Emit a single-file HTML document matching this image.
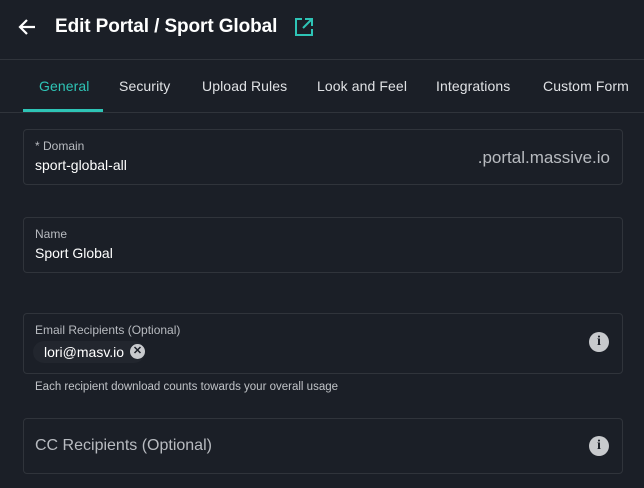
<!DOCTYPE html>
<html><head><style>
*{box-sizing:border-box;margin:0;padding:0}
body{width:644px;height:488px;overflow:hidden;background:#1b1f27;font-family:"Liberation Sans",sans-serif;color:#fff;position:relative}
.a{position:absolute}
.box{position:absolute;left:23px;width:600px;border:1px solid #30343b;border-radius:4px}
.lbl{position:absolute;left:11px;font-size:12px;color:#b8bbc0}
.val{position:absolute;left:11px;font-size:14px;color:#fff}
.tab{position:absolute;top:78px;font-size:14px;color:#e0e2e5;letter-spacing:0.1px}
.info{position:absolute;right:13px;width:20px;height:20px;border-radius:50%;background:#c8cacd;color:#1b1f27;font-weight:bold;font-size:14px;text-align:center;line-height:20px;font-family:"Liberation Serif",serif}
</style></head><body>
<svg class="a" style="left:17px;top:17px" width="20" height="20" viewBox="0 0 20 20"><path d="M18 10H3M10 3L3 10L10 17" stroke="#fff" stroke-width="2.2" fill="none"/></svg>
<div class="a" style="left:55px;top:16px;font-size:19px;font-weight:bold;letter-spacing:-0.1px">Edit Portal / Sport Global</div>
<svg class="a" style="left:294px;top:17px" width="20" height="20" viewBox="0 0 20 20"><path d="M8 2H2V18H18V12M11 2H18V9M18 2L9 11" stroke="#2ec4b6" stroke-width="2" fill="none"/></svg>
<div class="a" style="left:0;top:59px;width:644px;height:1px;background:#30343b"></div>
<div class="tab" style="left:39px;color:#2ec4b6">General</div>
<div class="tab" style="left:119px">Security</div>
<div class="tab" style="left:202px">Upload Rules</div>
<div class="tab" style="left:317px">Look and Feel</div>
<div class="tab" style="left:436px">Integrations</div>
<div class="tab" style="left:543px">Custom Form</div>
<div class="a" style="left:0;top:112px;width:644px;height:1px;background:#30343b"></div>
<div class="a" style="left:23px;top:109px;width:80px;height:3px;background:#2ec4b6"></div>
<div class="box" style="top:129px;height:56px"><div class="lbl" style="top:9px">* Domain</div><div class="val" style="top:27px">sport-global-all</div><div class="a" style="right:12px;top:18px;font-size:17px;color:#b8bbc0">.portal.massive.io</div></div>
<div class="box" style="top:217px;height:56px"><div class="lbl" style="top:9px">Name</div><div class="val" style="top:27px">Sport Global</div></div>
<div class="box" style="top:313px;height:61px"><div class="lbl" style="top:9px">Email Recipients (Optional)</div>
<div class="a" style="left:9px;top:27px;height:22px;width:112px;border-radius:11px;background:#22262e"></div>
<div class="val" style="top:30px;left:20px">lori@masv.io</div>
<div class="a" style="left:106px;top:30px;width:15px;height:15px;border-radius:50%;background:#c8cacd;color:#1b1f27;font-size:11px;line-height:15px;text-align:center;font-weight:bold">✕</div>
<div class="info" style="top:18px">i</div></div>
<div class="a" style="left:35px;top:381px;font-size:11.5px;color:#c0c3c7">Each recipient download counts towards your overall usage</div>
<div class="box" style="top:418px;height:56px"><div class="a" style="left:11px;top:18px;font-size:16px;color:#b8bbc0">CC Recipients (Optional)</div><div class="info" style="top:17px">i</div></div>
</body></html>
